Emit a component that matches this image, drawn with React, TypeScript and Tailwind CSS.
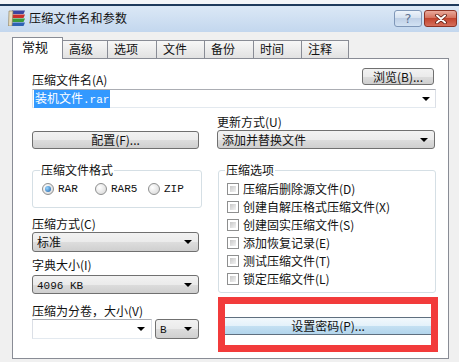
import type { ReactNode } from 'react'

const tabs = [
  { label: '高级', w: 'w-[45px]' },
  { label: '选项', w: 'w-[49px]' },
  { label: '文件', w: 'w-[48px]' },
  { label: '备份', w: 'w-[49px]' },
  { label: '时间', w: 'w-[48px]' },
  { label: '注释', w: 'w-[47px]' },
]

const options = [
  '压缩后删除源文件(D)',
  '创建自解压格式压缩文件(X)',
  '创建固实压缩文件(S)',
  '添加恢复记录(E)',
  '测试压缩文件(T)',
  '锁定压缩文件(L)',
]

function Button({ children, className = '' }: { children: ReactNode; className?: string }) {
  return (
    <div
      className={`flex items-center justify-center rounded-[3px] border border-[#707070] bg-[linear-gradient(#f2f2f2,#ebebeb_50%,#dddddd_50%,#cfcfcf)] text-[12px] leading-[14px] text-[#111] ${className}`}
    >
      {children}
    </div>
  )
}

function Arrow() {
  return <span className="h-0 w-0 border-x-[4px] border-t-[4px] border-x-transparent border-t-black" />
}

function Select({ children, className = '' }: { children?: ReactNode; className?: string }) {
  return (
    <div
      className={`flex items-center justify-between rounded-[3px] border border-[#707070] bg-[linear-gradient(#f2f2f2,#ebebeb_50%,#dddddd_50%,#cfcfcf)] pl-[4px] pr-[6px] text-[12px] leading-[14px] text-[#111] ${className}`}
    >
      <span>{children}</span>
      <Arrow />
    </div>
  )
}

function Radio({ checked = false }: { checked?: boolean }) {
  return (
    <span className="flex h-[12px] w-[12px] items-center justify-center rounded-full border border-[#8e8f8f] bg-[radial-gradient(circle_at_35%_35%,#ffffff,#d4d4d4)]">
      {checked && (
        <span className="h-[6px] w-[6px] rounded-full bg-[radial-gradient(circle_at_35%_35%,#9ad6ff,#1b5fa6)]" />
      )}
    </span>
  )
}

function Checkbox() {
  return (
    <span className="flex h-[12px] w-[12px] border border-[#8e8f8f] bg-white p-[2px]">
      <span className="h-full w-full bg-linear-to-br from-[#c8c8c8] to-[#f3f3f3]" />
    </span>
  )
}

function RarIcon() {
  return (
    <svg width="18" height="16" viewBox="0 0 18 16">
      <path d="M4 0.5 L17 0.5 L15.5 4 L2.5 4 Z" fill="#3b46a0" />
      <path d="M4 4.5 L17 4.5 L15.5 8 L2.5 8 Z" fill="#c9302c" />
      <path d="M4 8.5 L17 8.5 L15.5 12 L2.5 12 Z" fill="#3c9a3b" />
      <path d="M4 12.5 L17 12.5 L15.5 16 L2.5 16 Z" fill="#2e62b4" />
      <path d="M1 1 L5 1 L4 16 L0.5 16 Z" fill="#e9dcbc" />
      <path d="M1 1 L5 1 L4 16 L0.5 16 Z" fill="none" stroke="#8a7a55" strokeWidth="0.6" />
    </svg>
  )
}

export default function App() {
  return (
    <div className="h-[362px] w-[459px] overflow-hidden bg-[#f0f0f0] font-['Noto_Sans_CJK_SC',sans-serif] text-[12px] text-[#111]">
      {/* Title bar */}
      <div className="h-[4px] bg-[#f3f5f8]" />
      <div className="h-[2px] bg-[#1e3a5c]" />
      <div className="flex h-[26px] items-start bg-linear-to-b from-[#dbe8f6] to-[#c3d7ee] pl-[8px] pr-[2px]">
        <div className="mt-[4px] flex items-center gap-[3px]">
          <RarIcon />
          <span className="text-[12px] leading-[16px] tracking-[0.3px]">压缩文件名和参数</span>
        </div>
        <div className="ml-auto mt-[4px] flex gap-[2px]">
          <div className="flex h-[17px] w-[28px] items-center justify-center rounded-[3px] border border-[#7f97b8] bg-[linear-gradient(#eef4fb,#d6e2f0_45%,#bfd0e6_50%,#d2e2f3)] font-['DejaVu_Sans',sans-serif] text-[13px] leading-none text-[#5d7291]">
            ?
          </div>
          <div className="flex h-[17px] w-[33px] items-center justify-center rounded-[3px] border border-[#8d3325] bg-[linear-gradient(#eaaa9c,#d57460_45%,#c2442e_50%,#d66f5c)]">
            <svg width="12" height="10" viewBox="0 0 12 10">
              <path d="M2 1.5 L10 8.5 M10 1.5 L2 8.5" stroke="#5b1a10" strokeWidth="3.6" strokeLinecap="round" />
              <path d="M2 1.5 L10 8.5 M10 1.5 L2 8.5" stroke="#ffffff" strokeWidth="2" strokeLinecap="round" />
            </svg>
          </div>
        </div>
      </div>

      {/* Tabs */}
      <div className="relative z-10 ml-[12px] mt-[5px] flex h-[22px] items-end">
        <div className="h-[22px] w-[51px] border-x border-t border-[#898c95] bg-white pl-[9px] pt-[2px] text-[13px] leading-[14px]">
          常规
        </div>
        {tabs.map((t) => (
          <div
            key={t.label}
            className={`mb-px h-[18px] ${t.w} border-r border-t border-[#898c95] bg-linear-to-b from-[#f7f7f7] to-[#e2e2e2] pl-[6px] pt-[1px] leading-[14px]`}
          >
            {t.label}
          </div>
        ))}
      </div>

      {/* Panel */}
      <div className="-mt-px ml-[12px] h-[301px] w-[437px] border border-[#898c95] bg-white pl-[19px] pr-[12px] pt-[9px]">
        <div className="flex h-[17px] items-start justify-between">
          <span className="pt-[5px] leading-[14px]">压缩文件名(A)</span>
          <Button className="mr-[2px] h-[17px] w-[72px]">浏览(B)...</Button>
        </div>
        <div className="mt-[4px] flex h-[19px] items-center justify-between border border-[#abadb3] border-x-[#dbdfe6] border-b-[#e3e9ef] pl-[1px] pr-[5px]">
          <span className="bg-[#3399ff] px-[1px] leading-[15px] text-white">
            装机文件<span className="font-['Liberation_Mono',monospace] text-[11px]">.rar</span>
          </span>
          <Arrow />
        </div>

        <div className="grid grid-cols-[167px_219px] gap-x-[18px]">
          {/* Left column */}
          <div className="flex flex-col">
            <Button className="mt-[23px] h-[18px]">配置(F)...</Button>
            <fieldset className="mt-[14px] rounded-[3px] border border-[#d5dfe5] pb-[11px] pl-[7px]">
              <legend className="px-[1px] leading-[14px]">压缩文件格式</legend>
              <div className="ml-[2px] mt-[5px] flex h-[14px] items-center font-['Liberation_Mono',monospace] text-[11px]">
                <div className="flex w-[53px] items-center gap-[4px]">
                  <Radio checked />
                  <span>RAR</span>
                </div>
                <div className="flex w-[53px] items-center gap-[4px]">
                  <Radio />
                  <span>RAR5</span>
                </div>
                <div className="flex w-[53px] items-center gap-[4px]">
                  <Radio />
                  <span>ZIP</span>
                </div>
              </div>
            </fieldset>
            <span className="mt-[9px] leading-[14px]">压缩方式(C)</span>
            <Select className="mt-[1px] h-[20px]">标准</Select>
            <span className="mt-[6px] leading-[14px]">字典大小(I)</span>
            <Select className="mt-[3px] h-[19px]">
              <span className="font-['Liberation_Mono',monospace] text-[11px]">4096 KB</span>
            </Select>
            <span className="mt-[10px] leading-[14px]">压缩为分卷，大小(V)</span>
            <div className="mt-[1px] flex h-[20px] gap-[3px]">
              <div className="flex w-[120px] items-center justify-end border border-[#abadb3] border-x-[#dbdfe6] border-b-[#e3e9ef] pr-[6px]">
                <Arrow />
              </div>
              <Select className="w-[44px]">
                <span className="font-['Liberation_Mono',monospace] text-[11px]">B</span>
              </Select>
            </div>
          </div>

          {/* Right column */}
          <div className="flex flex-col">
            <span className="mt-[7px] leading-[14px]">更新方式(U)</span>
            <Select className="mr-[1px] mt-[1px] h-[19px]">添加并替换文件</Select>
            <fieldset className="ml-[1px] mt-[14px] rounded-[3px] border border-[#d5dfe5] pb-[4px] pl-[6px]">
              <legend className="px-[1px] leading-[14px]">压缩选项</legend>
              <div className="mt-[3px] flex flex-col">
                {options.map((o) => (
                  <div key={o} className="ml-[2px] flex h-[18px] items-center gap-[4px] leading-[14px]">
                    <Checkbox />
                    <span>{o}</span>
                  </div>
                ))}
              </div>
            </fieldset>
            <div className="-mr-[2px] ml-[1px] mt-[4px] h-[55px] border-[7px] border-[#f23b3b] bg-white pt-[13px]">
              <div className="flex h-[18px] items-center justify-center border-y border-[#5f6f7f] bg-[linear-gradient(#f2f8fc,#e3f1fa_50%,#c4e0f2_50%,#b3d5ec)] leading-[14px]">
                设置密码(P)...
              </div>
            </div>
          </div>
        </div>
      </div>
    </div>
  )
}
